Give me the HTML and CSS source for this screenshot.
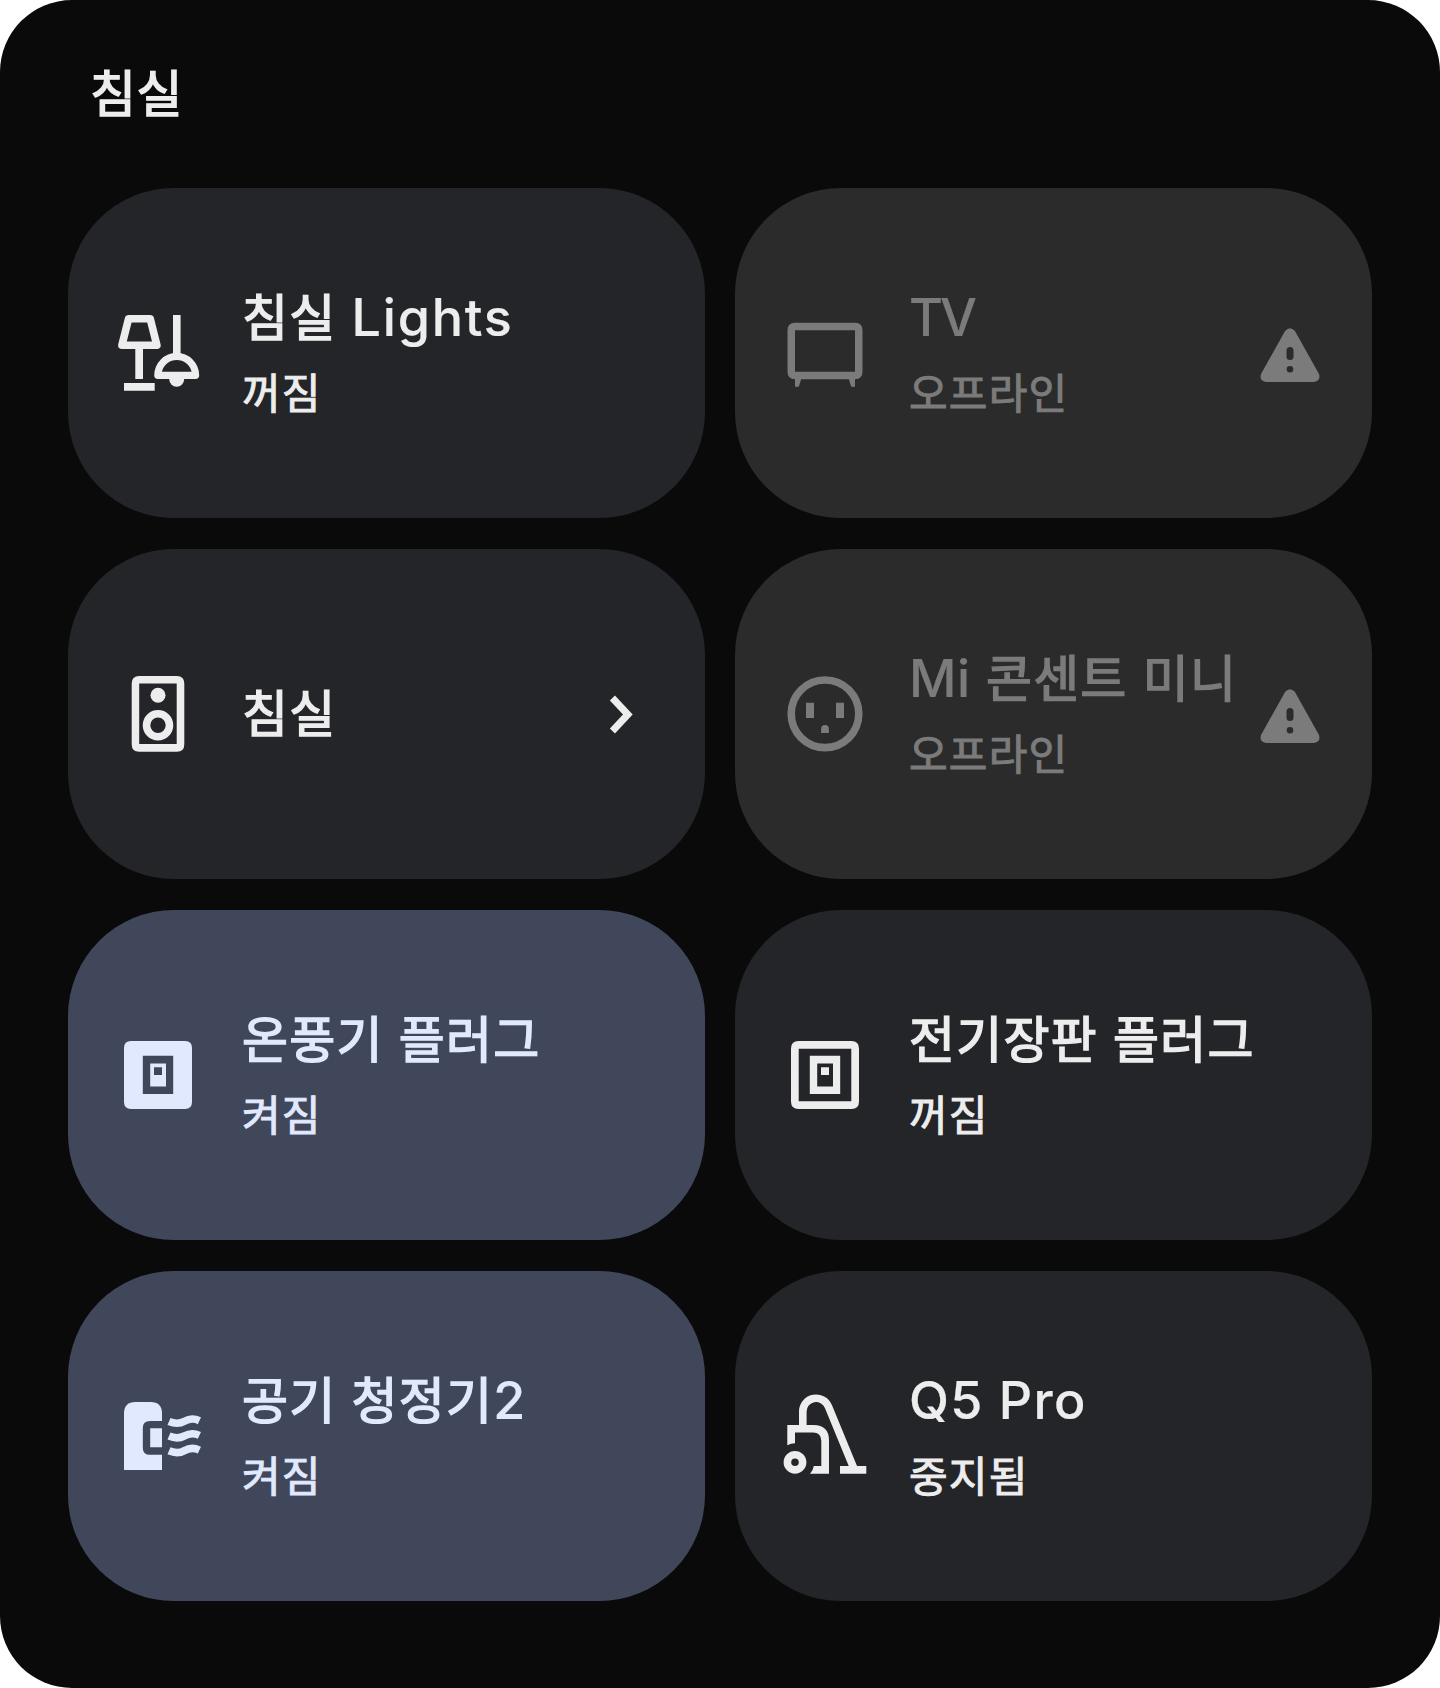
FILE: index.html
```
<!DOCTYPE html>
<html lang="ko">
<head>
<meta charset="utf-8">
<title>침실</title>
<link rel="stylesheet" href="styles.css">
</head>
<body>
<main class="panel">
  <h1 class="room">침실</h1>
  <div class="grid">
    <section class="card">
      <svg class="icon" viewBox="0 0 90 90">
        <path class="line round" d="M15.6 10.8H37.2L43.9 37.3H8.9Z"/>
        <path d="M22.3 40H30V71H22.3ZM11 75H41.7V82.7H11ZM60 7H67.6V47H60Z"/>
        <path fill-rule="evenodd" d="M41.2 67.3a22.5 22.5 0 0 1 45 0q0 3.7-3.7 3.7H44.9q-3.7 0-3.7-3.7ZM48.9 63.7H78.6a15.3 15.3 0 0 0-29.7 0Z"/>
        <path d="M56.2 71h15a7.5 7.7 0 0 1-15 0Z"/>
      </svg>
      <div class="text"><h2 class="name">침실 <span class="latin">Lights</span></h2><p class="state">꺼짐</p></div>
    </section>
    <section class="card offline">
      <svg class="icon" viewBox="0 0 90 90">
        <path fill-rule="evenodd" d="M15 14.8H75Q82.5 14.8 82.5 22.3V63.8Q82.5 71.3 75 71.3H15Q7.5 71.3 7.5 63.8V22.3Q7.5 14.8 15 14.8ZM15 22.3V63.8H75V22.3Z"/>
        <path d="M15 70H21.5L18.8 78.7H15ZM75 70H68.5L71.2 78.7H75Z"/>
      </svg>
      <div class="text"><h2 class="name"><span class="latin caps">TV</span></h2><p class="state">오프라인</p></div>
      <svg class="warn" viewBox="0 0 60 54"><path fill-rule="evenodd" d="M25.2 2.8Q30-2.3 34.8 2.8L59 46Q61 53 54 54H6Q-1 53 1 46ZM26.5 22.5V28.5A3.5 3.5 0 0 0 33.5 28.5V22.5A3.5 3.5 0 0 0 26.5 22.5ZM26.7 41.2A3.3 3.3 0 0 0 33.3 41.2A3.3 3.3 0 0 0 26.7 41.2Z"/></svg>
    </section>
    <section class="card">
      <svg class="icon" viewBox="0 0 90 90">
        <path fill-rule="evenodd" d="M26.2 7H63.8Q71.3 7 71.3 14.5V75.2Q71.3 82.7 63.8 82.7H26.2Q18.7 82.7 18.7 75.2V14.5Q18.7 7 26.2 7ZM26.2 14.6V75.1H63.7V14.6Z"/>
        <circle cx="45" cy="26.2" r="7.5"/>
        <circle class="line" cx="45" cy="56.2" r="11.5"/>
      </svg>
      <div class="text single"><h2 class="name">침실</h2></div>
      <svg class="chevron" viewBox="0 0 26 40"><path class="line" d="M3.4 4L18.9 20.5L3.4 37"/></svg>
    </section>
    <section class="card offline">
      <svg class="icon" viewBox="0 0 90 90">
        <circle class="line" cx="45" cy="44.8" r="33.8"/>
        <path d="M26 33.7H34V49H26ZM56 33.7H64V49H56ZM41.1 64V60a3.9 3.9 0 0 1 7.8 0V64Z"/>
      </svg>
      <div class="text"><h2 class="name"><span class="latin mi">Mi</span> 콘센트 미니</h2><p class="state">오프라인</p></div>
      <svg class="warn" viewBox="0 0 60 54"><path fill-rule="evenodd" d="M25.2 2.8Q30-2.3 34.8 2.8L59 46Q61 53 54 54H6Q-1 53 1 46ZM26.5 22.5V28.5A3.5 3.5 0 0 0 33.5 28.5V22.5A3.5 3.5 0 0 0 26.5 22.5ZM26.7 41.2A3.3 3.3 0 0 0 33.3 41.2A3.3 3.3 0 0 0 26.7 41.2Z"/></svg>
    </section>
    <section class="card on">
      <svg class="icon" viewBox="0 0 90 90">
        <path fill-rule="evenodd" d="M18 11H72Q79 11 79 18V72Q79 79 72 79H18Q11 79 11 72V18Q11 11 18 11ZM29.8 25.8V64H60.2V25.8ZM37.2 33.4H53V56.6H37.2ZM41 37.2V45H49V37.2Z"/>
      </svg>
      <div class="text"><h2 class="name">온풍기 플러그</h2><p class="state">켜짐</p></div>
    </section>
    <section class="card">
      <svg class="icon" viewBox="0 0 90 90">
        <path fill-rule="evenodd" d="M18.5 11H71.5Q79 11 79 18.5V71.5Q79 79 71.5 79H18.5Q11 79 11 71.5V18.5Q11 11 18.5 11ZM18.7 18.7V71.3H71.3V18.7ZM29.8 25.8H60.2V64H29.8ZM37.2 33.4V56.6H53V33.4ZM41 37.2H49V45H41Z"/>
      </svg>
      <div class="text"><h2 class="name">전기장판 플러그</h2><p class="state">꺼짐</p></div>
    </section>
    <section class="card on">
      <svg class="icon" viewBox="0 0 90 90">
        <path d="M11 79V22.5Q11 11 22.5 11H37.5Q49 11 49 22.5V30H37Q29.8 30 29.8 37V56.7Q29.8 63.8 37 63.8H49V79ZM37.2 37.3H49V56.2H37.2Z"/>
        <path class="line" d="M56 30.4C62 33 66.5 33 71.5 30.2S81 27.2 86.4 29.7M56 45.1C62 47.7 66.5 47.7 71.5 44.9S81 41.9 86.4 44.4M56 59.8C62 62.4 66.5 62.4 71.5 59.6S81 56.6 86.4 59.1"/>
      </svg>
      <div class="text"><h2 class="name">공기 청정기<span class="latin digit">2</span></h2><p class="state">켜짐</p></div>
    </section>
    <section class="card">
      <svg class="icon" viewBox="0 0 90 90">
        <path class="line" d="M22.8 37V20.7A13.3 13.3 0 0 1 48.4 15.5L73.7 77"/>
        <path d="M60 75H86.3V82.7H60ZM7.3 34H33.5Q49 34 49 49.5V82.7H30Q33 80 33.8 75H41.3V50Q41.3 41.5 33 41.5H15V52.2Q11 52.3 7.3 54.2Z"/>
        <circle class="line" cx="15" cy="71.3" r="7.6"/>
      </svg>
      <div class="text"><h2 class="name"><span class="latin model">Q5 Pro</span></h2><p class="state">중지됨</p></div>
    </section>
  </div>
</main>
</body>
</html>
```
FILE: styles.css
```
* { box-sizing: border-box; }
body { margin: 0; background: #fff; }
h1, h2, p { margin: 0; font-weight: 400; }

.panel {
  height: 1688px;
  padding: 52px 68px 0;
  border-radius: 72px;
  background: #0a0a0a;
  color: #ededee;
  font-family: "Noto Sans CJK KR", sans-serif;
}
.room {
  height: 136px;
  padding-left: 22px;
  font-size: 50px;
  line-height: 76px;
  letter-spacing: 0.6px;
  -webkit-text-stroke: 1.5px currentColor;
}
.grid {
  display: grid;
  grid-template-columns: 1fr 1fr;
  grid-auto-rows: 330px;
  gap: 31px 30px;
}
.card {
  display: flex;
  align-items: center;
  padding: 0 52.5px 0 45px;
  border-radius: 106px;
  background: #242528;
}
.card.on { background: #41475b; color: #e1e9ff; }
.card.offline { background: #2b2b2b; color: #7b7b7b; }

.icon { width: 90px; height: 90px; margin-right: 39px; flex: none; }
svg { fill: currentColor; }
.line { fill: none; stroke: currentColor; stroke-width: 7.6; }
.round { stroke-linejoin: round; }

.text { flex: 1; padding-top: 1px; white-space: nowrap; }
.text.single { padding: 0 0 7px; }
.name {
  font-size: 50px;
  line-height: 75px;
  letter-spacing: 1.2px;
  -webkit-text-stroke: 1.5px currentColor;
}
.state {
  font-size: 42px;
  line-height: 78px;
  letter-spacing: 1.2px;
  -webkit-text-stroke: 1px currentColor;
}
.latin {
  font-family: Inter, sans-serif;
  font-size: 52px;
  font-weight: 500;
  line-height: 1;
  letter-spacing: 1.8px;
  -webkit-text-stroke: 0.2px currentColor;
}
.latin.caps { letter-spacing: -3px; }
.latin.mi { letter-spacing: 0.6px; }
.latin.model { letter-spacing: 1.3px; }
.latin.digit { letter-spacing: 0; }

.warn { width: 60px; height: 54px; margin-top: 4px; flex: none; }
.chevron { width: 26px; height: 40px; margin-right: 17.5px; flex: none; }
.chevron .line { stroke-width: 7px; }
```
